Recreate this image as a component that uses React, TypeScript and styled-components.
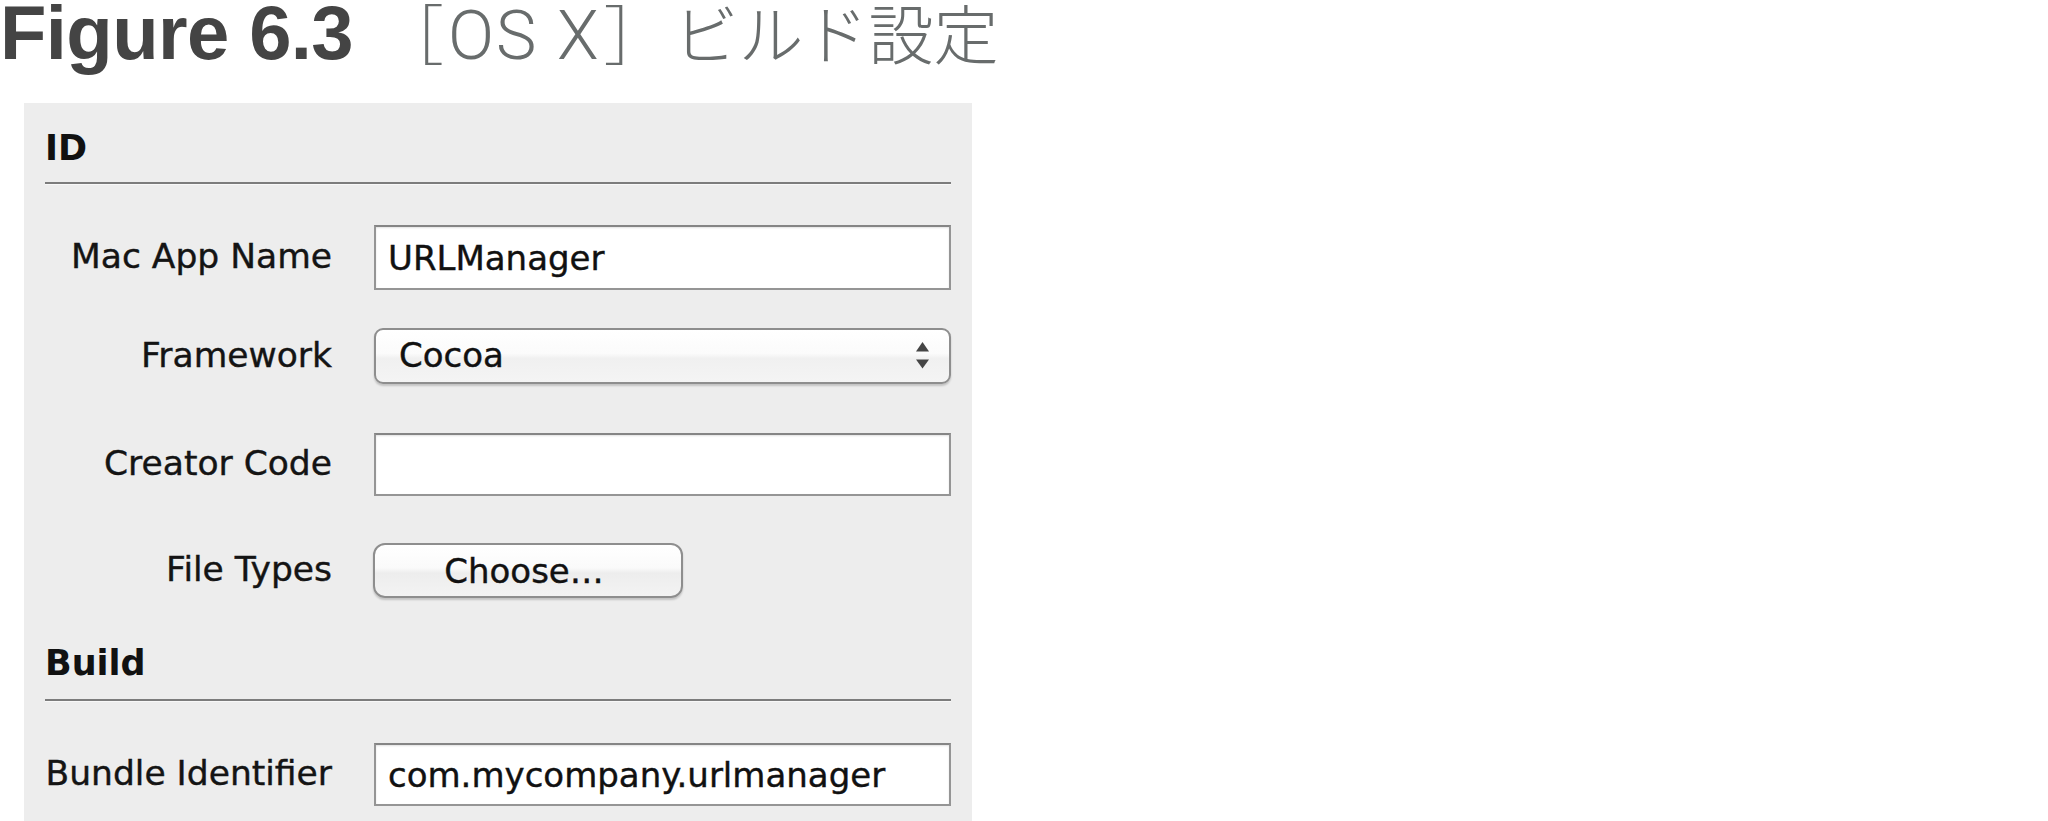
import React from "react";
import styled, { createGlobalStyle } from "styled-components";

const Global = createGlobalStyle`
  html, body { margin: 0; padding: 0; background: #ffffff; }
  body { overflow: hidden; }
`;

const Page = styled.div`
  width: 2048px;
  height: 821px;
  display: flex;
  flex-direction: column;
`;

const Title = styled.h1`
  margin: 0;
  height: 103px;
  display: flex;
  align-items: baseline;
  white-space: nowrap;
`;

const FigureNo = styled.span`
  font-family: "Liberation Sans", Arial, sans-serif;
  font-weight: 700;
  font-size: 76px;
  line-height: 66px;
  letter-spacing: -0.6px;
  color: #444444;
`;

const Caption = styled.span`
  margin-left: 26px;
  font-family: "Noto Sans CJK JP", sans-serif;
  font-weight: 300;
  font-size: 65px;
  line-height: 60px;
  color: #686c6c;
`;

const Latin = styled.span`
  margin: 0 3px 0 4px;
  font-family: Roboto, "Liberation Sans", sans-serif;
  font-weight: 300;
  font-size: 68px;
  letter-spacing: 2px;
`;

const Kana = styled.span`
  margin-left: 5px;
`;

const Panel = styled.section`
  margin-left: 24px;
  width: 948px;
  flex: 1;
  box-sizing: border-box;
  padding: 25px 21px 0 21px;
  background: #ededed;
  display: flex;
  flex-direction: column;
`;

const SectionHead = styled.div<{ $top?: number }>`
  margin-top: ${(p) => p.$top ?? 0}px;
  font-family: "DejaVu Sans", Verdana, sans-serif;
  font-weight: 700;
  font-size: 35px;
  line-height: 40px;
  color: #111111;
`;

const Rule = styled.hr<{ $top: number }>`
  margin: ${(p) => p.$top}px 0 0 0;
  border: none;
  height: 2px;
  background: #7c7c7c;
  box-shadow: 0 1px 0 #f8f8f8;
`;

const Row = styled.div<{ $top: number }>`
  margin-top: ${(p) => p.$top}px;
  display: grid;
  grid-template-columns: 287px 577px;
  column-gap: 42px;
  align-items: center;
`;

const Label = styled.label`
  text-align: right;
  font-family: "DejaVu Sans", Verdana, sans-serif;
  font-size: 34.5px;
  line-height: 40px;
  padding-bottom: 3px;
  color: #141414;
  -webkit-text-stroke: 0.4px #141414;
  white-space: nowrap;
`;

const TextField = styled.div<{ $h: number }>`
  height: ${(p) => p.$h}px;
  box-sizing: border-box;
  border: 2px solid #959595;
  border-top-color: #858585;
  background: #ffffff;
  box-shadow: inset 0 1px 2px rgba(0, 0, 0, 0.12);
  padding: 0 12px;
  display: flex;
  align-items: center;
  font-family: "DejaVu Sans", Verdana, sans-serif;
  font-size: 34px;
  color: #111111;
  -webkit-text-stroke: 0.4px #111111;
  white-space: nowrap;
`;

const Popup = styled.div`
  height: 56px;
  box-sizing: border-box;
  border: 2px solid #8e8e8e;
  border-radius: 9px;
  background: linear-gradient(#ffffff 0%, #fbfbfb 45%, #f0f0f0 55%, #f4f4f4 100%);
  box-shadow: 0 2px 2px rgba(0, 0, 0, 0.18);
  padding: 0 20px 2px 23px;
  display: flex;
  align-items: center;
  justify-content: space-between;
  font-family: "DejaVu Sans", Verdana, sans-serif;
  font-size: 34px;
  color: #111111;
  -webkit-text-stroke: 0.4px #111111;
`;

const Button = styled.button`
  width: 310px;
  height: 55px;
  box-sizing: border-box;
  border: 2px solid #8e8e8e;
  border-radius: 12px;
  background: linear-gradient(#ffffff 0%, #fafafa 45%, #ededed 55%, #f3f3f3 100%);
  box-shadow: 0 2px 2px rgba(0, 0, 0, 0.18);
  font-family: "DejaVu Sans", Verdana, sans-serif;
  font-size: 34px;
  color: #111111;
  -webkit-text-stroke: 0.4px #111111;
  padding: 0 8px 0 0;
  justify-self: start;
  margin-left: -1px;
`;

const Arrows = () => (
  <svg width="13" height="27" viewBox="0 0 13 27">
    <path d="M6.5 0 L13 9.5 L0 9.5 Z" fill="#454545" />
    <path d="M0 17.5 L13 17.5 L6.5 26.5 Z" fill="#454545" />
  </svg>
);

export default function App() {
  return (
    <>
      <Global />
      <Page>
        <Title>
          <FigureNo>Figure 6.3</FigureNo>
          <Caption>
            ［<Latin>OS X</Latin>］<Kana>ビルド設定</Kana>
          </Caption>
        </Title>
        <Panel>
          <SectionHead>ID</SectionHead>
          <Rule $top={14} />
          <Row $top={41}>
            <Label>Mac App Name</Label>
            <TextField $h={65}>URLManager</TextField>
          </Row>
          <Row $top={38}>
            <Label>Framework</Label>
            <Popup>
              <span>Cocoa</span>
              <Arrows />
            </Popup>
          </Row>
          <Row $top={49}>
            <Label>Creator Code</Label>
            <TextField $h={63} />
          </Row>
          <Row $top={47}>
            <Label>File Types</Label>
            <Button>Choose…</Button>
          </Row>
          <SectionHead $top={45}>Build</SectionHead>
          <Rule $top={16} />
          <Row $top={42}>
            <Label>Bundle Identifier</Label>
            <TextField $h={63}>com.mycompany.urlmanager</TextField>
          </Row>
        </Panel>
      </Page>
    </>
  );
}
